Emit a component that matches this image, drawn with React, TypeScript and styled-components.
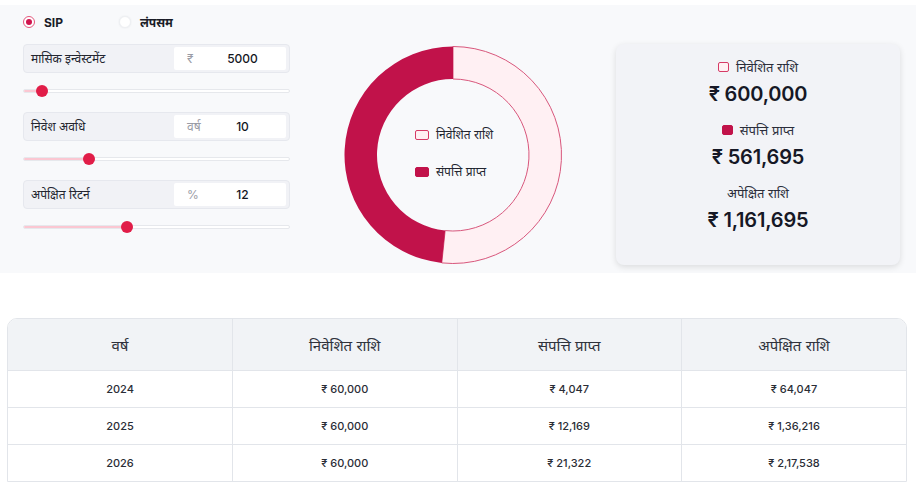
import React from 'react';
import styled, { createGlobalStyle } from 'styled-components';

const GlobalStyle = createGlobalStyle`
  body {
    margin: 0;
    background: #fff;
    font-family: 'Inter', 'Noto Sans', sans-serif;
    color: #1f2330;
  }
`;

const Page = styled.div`
  width: 918px;
  padding-top: 5px;
`;

const TopSection = styled.section`
  display: grid;
  grid-template-columns: 267px 1fr 284px;
  height: 268px;
  box-sizing: border-box;
  padding: 10px 16px 0 23px;
  background: #f8f9fb;
  margin-right: 2px;
`;

const LeftCol = styled.div`
  display: flex;
  flex-direction: column;
`;

const RadioRow = styled.div`
  display: flex;
  align-items: center;
  height: 14px;
  margin-bottom: 15px;
`;

const RadioItem = styled.label<{ $gap: number }>`
  display: flex;
  align-items: center;
  gap: 9px;
  margin-right: ${p => p.$gap}px;
  font-size: 12px;
  font-weight: 700;
  color: #1a1d28;
`;

const RadioDot = styled.span<{ $on?: boolean }>`
  width: 12px;
  height: 12px;
  border-radius: 50%;
  box-sizing: border-box;
  background: #fff;
  border: 1.5px solid ${p => (p.$on ? '#e4577c' : '#eef0f3')};
  box-shadow: ${p => (p.$on ? 'none' : '0 0 2px rgba(0,0,0,0.08)')};
  display: flex;
  align-items: center;
  justify-content: center;
  &::after {
    content: '';
    width: 6px;
    height: 6px;
    border-radius: 50%;
    background: ${p => (p.$on ? '#d0144d' : 'transparent')};
  }
`;

const InputBox = styled.div`
  display: flex;
  align-items: center;
  justify-content: space-between;
  height: 29px;
  box-sizing: border-box;
  padding: 0 3px 0 7px;
  background: #f1f2f6;
  border: 1px solid #e6e8ee;
  border-radius: 4px;
`;

const InputLabel = styled.span`
  font-size: 12px;
  color: #22252f;
`;

const Field = styled.div`
  display: flex;
  align-items: center;
  width: 112px;
  height: 23px;
  background: #fff;
  border-radius: 2px;
`;

const Prefix = styled.span`
  width: 25px;
  padding-left: 13px;
  box-sizing: border-box;
  font-size: 12px;
  color: #9a9ca6;
`;

const Value = styled.span`
  flex: 1;
  text-align: center;
  font-size: 12px;
  font-weight: 500;
  color: #15171f;
`;

const SliderWrap = styled.div`
  height: 39px;
  padding-top: 12px;
  box-sizing: border-box;
`;

const Track = styled.div`
  position: relative;
  height: 4px;
  margin-top: 4px;
  background: #fff;
  border: 1px solid #e6e8ec;
  border-radius: 3px;
  box-sizing: border-box;
`;

const Fill = styled.div`
  position: absolute;
  left: 0;
  top: 0;
  bottom: 0;
  background: #fbc7d2;
  border-radius: 3px;
`;

const Thumb = styled.div`
  position: absolute;
  top: -5px;
  width: 12px;
  height: 12px;
  margin-left: -6px;
  border-radius: 50%;
  background: #e11d48;
`;

const MidCol = styled.div`
  display: flex;
  justify-content: center;
  padding-top: 30px;
`;

const DonutBox = styled.div`
  position: relative;
  width: 220px;
  height: 220px;
`;

const DonutLegend = styled.div`
  position: absolute;
  left: 72px;
  top: 81px;
  display: flex;
  flex-direction: column;
  gap: 20px;
`;

const LegendItem = styled.div`
  display: flex;
  align-items: center;
  gap: 7px;
  font-size: 12px;
  color: #22252f;
`;

const Swatch = styled.span<{ $filled?: boolean; $w?: number }>`
  display: inline-block;
  width: ${p => p.$w ?? 14}px;
  height: 10px;
  box-sizing: border-box;
  border-radius: 2px;
  border: 1.3px solid ${p => (p.$filled ? '#c1124a' : '#d63a66')};
  background: ${p => (p.$filled ? '#c1124a' : '#fff0f3')};
`;

const RightCol = styled.div`
  padding-top: 29px;
`;

const Card = styled.div`
  height: 221px;
  box-sizing: border-box;
  padding-top: 14px;
  background: #f2f3f7;
  border-radius: 8px;
  box-shadow: 0 2px 6px rgba(0, 0, 0, 0.12);
  display: flex;
  flex-direction: column;
  align-items: center;
`;

const Stat = styled.div`
  display: flex;
  flex-direction: column;
  align-items: center;
  height: 63px;
`;

const StatLabel = styled.div`
  display: flex;
  align-items: center;
  gap: 7px;
  height: 18px;
  font-size: 13px;
  color: #2a2d3a;
`;

const StatValue = styled.div`
  margin-top: 6px;
  font-size: 20px;
  font-weight: 600;
  color: #161826;
  letter-spacing: -0.2px;
`;

const TableWrap = styled.div`
  margin: 45px 11px 0 7px;
  border: 1px solid #e2e5ea;
  border-radius: 10px 10px 0 0;
  overflow: hidden;
`;

const Table = styled.table`
  width: 100%;
  border-collapse: collapse;
  table-layout: fixed;
`;

const Th = styled.th`
  height: 51px;
  padding: 0;
  background: #f1f3f6;
  font-size: 15px;
  font-weight: 400;
  color: #2f323c;
  border-left: 1px solid #e2e5ea;
  border-bottom: 1px solid #e2e5ea;
  &:first-child { border-left: none; }
`;

const Td = styled.td`
  height: 36px;
  padding: 0;
  line-height: 14px;
  text-align: center;
  font-size: 11px;
  font-weight: 500;
  color: #2a2d36;
  border-left: 1px solid #e2e5ea;
  border-top: 1px solid #e2e5ea;
  &:first-child { border-left: none; }
`;

type SliderProps = { label: string; prefix: string; value: number; min: number; max: number };

const sliders: SliderProps[] = [
  { label: 'मासिक इन्वेस्टमेंट', prefix: '₹', value: 5000, min: 500, max: 100000 },
  { label: 'निवेश अवधि', prefix: 'वर्ष', value: 10, min: 1, max: 40 },
  { label: 'अपेक्षित रिटर्न', prefix: '%', value: 12, min: 1, max: 30 },
];

const rows = [
  ['2024', '₹ 60,000', '₹ 4,047', '₹ 64,047'],
  ['2025', '₹ 60,000', '₹ 12,169', '₹ 1,36,216'],
  ['2026', '₹ 60,000', '₹ 21,322', '₹ 2,17,538'],
];

const SliderInput: React.FC<SliderProps> = ({ label, prefix, value, min, max }) => {
  const pct = (value - min) / (max - min);
  const left = 6 + pct * (267 - 12);
  return (
    <>
      <InputBox>
        <InputLabel>{label}</InputLabel>
        <Field>
          <Prefix>{prefix}</Prefix>
          <Value>{value}</Value>
        </Field>
      </InputBox>
      <SliderWrap>
        <Track>
          <Fill style={{ width: left }} />
          <Thumb style={{ left }} />
        </Track>
      </SliderWrap>
    </>
  );
};

const arc = (cx: number, cy: number, ro: number, ri: number, a0: number, a1: number) => {
  const p = (r: number, a: number) => {
    const t = ((a - 90) * Math.PI) / 180;
    return `${cx + r * Math.cos(t)} ${cy + r * Math.sin(t)}`;
  };
  const large = a1 - a0 > 180 ? 1 : 0;
  return `M ${p(ro, a0)} A ${ro} ${ro} 0 ${large} 1 ${p(ro, a1)} L ${p(ri, a1)} A ${ri} ${ri} 0 ${large} 0 ${p(ri, a0)} Z`;
};

const Donut: React.FC = () => {
  const invested = 600000;
  const total = 1161695;
  const split = (invested / total) * 360;
  return (
    <DonutBox>
      <svg width="220" height="220" viewBox="0 0 220 220">
        <path d={arc(110, 110, 108.5, 76, 0, split)} fill="#fff0f3" stroke="#d8577c" strokeWidth="1" />
        <path d={arc(110, 110, 108.5, 76, split, 360)} fill="#c1124a" />
      </svg>
      <DonutLegend>
        <LegendItem><Swatch />निवेशित राशि</LegendItem>
        <LegendItem><Swatch $filled />संपत्ति प्राप्त</LegendItem>
      </DonutLegend>
    </DonutBox>
  );
};

const App: React.FC = () => {
  return (
    <Page>
      <GlobalStyle />
      <TopSection>
        <LeftCol>
          <RadioRow>
            <RadioItem $gap={56}><RadioDot $on />SIP</RadioItem>
            <RadioItem $gap={0}><RadioDot />लंपसम</RadioItem>
          </RadioRow>
          {sliders.map(s => (
            <SliderInput key={s.label} {...s} />
          ))}
        </LeftCol>
        <MidCol>
          <Donut />
        </MidCol>
        <RightCol>
          <Card>
            <Stat>
              <StatLabel><Swatch $w={11} />निवेशित राशि</StatLabel>
              <StatValue>₹ 600,000</StatValue>
            </Stat>
            <Stat>
              <StatLabel><Swatch $filled $w={11} />संपत्ति प्राप्त</StatLabel>
              <StatValue>₹ 561,695</StatValue>
            </Stat>
            <Stat>
              <StatLabel>अपेक्षित राशि</StatLabel>
              <StatValue>₹ 1,161,695</StatValue>
            </Stat>
          </Card>
        </RightCol>
      </TopSection>
      <TableWrap>
        <Table>
          <thead>
            <tr>
              <Th>वर्ष</Th>
              <Th>निवेशित राशि</Th>
              <Th>संपत्ति प्राप्त</Th>
              <Th>अपेक्षित राशि</Th>
            </tr>
          </thead>
          <tbody>
            {rows.map(r => (
              <tr key={r[0]}>
                {r.map((c, i) => (
                  <Td key={i}>{c}</Td>
                ))}
              </tr>
            ))}
          </tbody>
        </Table>
      </TableWrap>
    </Page>
  );
};

export default App;
